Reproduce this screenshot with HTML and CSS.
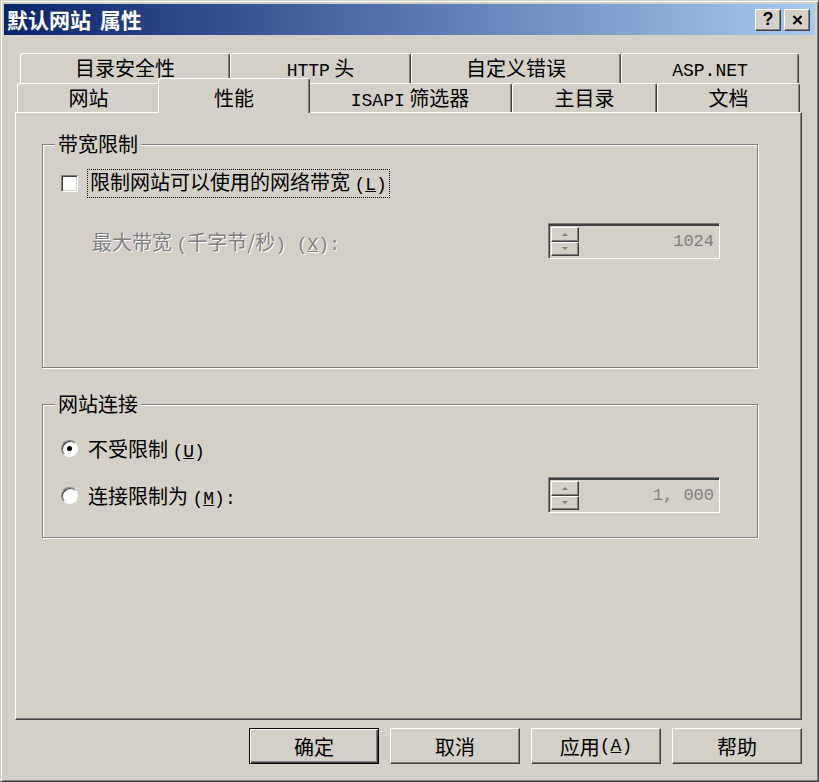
FILE: index.html
```html
<!DOCTYPE html>
<html lang="zh-CN">
<head>
  <meta charset="UTF-8">
  <title>默认网站 属性</title>
  <link rel="stylesheet" href="styles.css">
</head>
<body>
  <div class="window">
    <div class="titlebar">
      <span class="title">默认网站 属性</span>
      <div class="cap-btns">
        <span class="cap-btn">?</span>
        <span class="cap-btn">
          <svg width="11" height="10" viewBox="0 0 11 10"><path d="M1.5 1 L9.5 9 M9.5 1 L1.5 9" stroke="#000" stroke-width="2.2" fill="none"/></svg>
        </span>
      </div>
    </div>

    <div class="tabs">
      <div class="tab-row back">
        <div class="tab t-dirsec">目录安全性</div>
        <div class="tab t-http"><span class="en">HTTP</span> 头</div>
        <div class="tab t-err">自定义错误</div>
        <div class="tab t-asp"><span class="en">ASP.NET</span></div>
      </div>
      <div class="tab-row front">
        <div class="tab t-site">网站</div>
        <div class="tab t-perf active">性能</div>
        <div class="tab t-isapi"><span class="en">ISAPI</span> 筛选器</div>
        <div class="tab t-home">主目录</div>
        <div class="tab t-docs">文档</div>
      </div>
    </div>

    <div class="panel">
      <div class="group g1">
        <div class="legend">带宽限制</div>
        <div class="check-row">
          <span class="checkbox"></span>
          <span class="focus">限制网站可以使用的网络带宽 <span class="en">(<u>L</u>)</span></span>
        </div>
        <div class="spin-row indent">
          <span class="disabled">最大带宽 <span class="en">(</span>千字节/秒<span class="en">) (<u>X</u>):</span></span>
          <div class="spin">
            <div class="spin-btns">
              <span class="spin-btn"><i class="arrow up"></i></span>
              <span class="spin-btn"><i class="arrow down"></i></span>
            </div>
            <span class="spin-val">1024</span>
          </div>
        </div>
      </div>

      <div class="group g2">
        <div class="legend">网站连接</div>
        <div class="radio-row">
          <span class="radio on"></span>
          <span class="label">不受限制 <span class="en">(<u>U</u>)</span></span>
        </div>
        <div class="spin-row limit">
          <div class="radio-row inline">
            <span class="radio"></span>
            <span class="label">连接限制为 <span class="en">(<u>M</u>):</span></span>
          </div>
          <div class="spin">
            <div class="spin-btns">
              <span class="spin-btn"><i class="arrow up"></i></span>
              <span class="spin-btn"><i class="arrow down"></i></span>
            </div>
            <span class="spin-val">1, 000</span>
          </div>
        </div>
      </div>
    </div>

    <div class="buttons">
      <button class="btn default">确定</button>
      <button class="btn">取消</button>
      <button class="btn">应用 <span class="en">(<u>A</u>)</span></button>
      <button class="btn">帮助</button>
    </div>
  </div>
</body>
</html>
```

FILE: styles.css
```css
body {
  margin: 0;
  background: #d4d0c8;
  font-family: "Noto Sans CJK SC", "Noto Sans", sans-serif;
  font-size: 20px;
  color: #000;
}

.en {
  font-family: "Liberation Mono", "Noto Sans CJK SC", monospace;
  font-size: 18px;
}

.window {
  width: 819px;
  height: 782px;
  box-sizing: border-box;
  border: 1px solid;
  border-color: #d4d0c8 #404040 #404040 #d4d0c8;
  box-shadow: inset 1px 1px #fff, inset -1px -1px #808080;
  padding: 3px;
}

/* title bar */
.titlebar {
  height: 31px;
  display: flex;
  align-items: center;
  justify-content: space-between;
  padding: 0 5px 0 3px;
  background: linear-gradient(to right, #0a246a, #a6caf0);
}
.title {
  color: #fff;
  font-weight: bold;
  font-size: 21px;
  line-height: 31px;
  word-spacing: 4px;
}
.cap-btns {
  display: flex;
  gap: 3px;
}
.cap-btn {
  width: 26px;
  height: 22px;
  box-sizing: border-box;
  background: #d4d0c8;
  border: 1px solid;
  border-color: #fff #404040 #404040 #fff;
  box-shadow: inset -1px -1px #808080;
  display: flex;
  align-items: center;
  justify-content: center;
  font: bold 18px "Liberation Sans", sans-serif;
}

/* tabs */
.tabs {
  margin: 18px 0 0 11px;
}
.tab-row {
  display: flex;
  height: 30px;
}
.tab-row.back {
  padding-left: 5px;
}
.tab-row.front {
  padding-left: 2px;
  height: 29px;
  align-items: flex-end;
}
.tab {
  box-sizing: border-box;
  height: 30px;
  border-top: 1px solid #fff;
  border-left: 1px solid #fff;
  border-right: 1px solid #404040;
  box-shadow: inset -1px 0 #808080;
  border-radius: 3px 3px 0 0;
  text-align: center;
  line-height: 28px;
  white-space: nowrap;
}
.front .tab {
  height: 29px;
}
.front .tab.active {
  height: 35px;
  margin: -5px -2px -1px -2px;
  padding-top: 5px;
  position: relative;
  z-index: 1;
  background: #d4d0c8;
}
.t-dirsec { width: 210px; }
.t-http { width: 181px; }
.t-err { width: 210px; }
.t-asp { width: 178px; }
.t-site { width: 143px; }
.t-perf { width: 152px; }
.t-isapi { width: 204px; }
.t-home { width: 145px; }
.t-docs { width: 143px; }

/* page */
.panel {
  margin-left: 11px;
  width: 787px;
  height: 608px;
  box-sizing: border-box;
  border: 1px solid;
  border-color: #fff #404040 #404040 #fff;
  box-shadow: inset -1px -1px #808080;
  padding-left: 26px;
}

.group {
  width: 716px;
  box-sizing: border-box;
  border: 1px solid #808080;
  box-shadow: 1px 1px #fff, inset 1px 1px #fff;
}
.g1 {
  margin-top: 31px;
  height: 224px;
}
.g2 {
  margin-top: 36px;
  height: 134px;
}
.legend {
  display: table;
  margin: -12px 0 0 12px;
  padding: 0 3px;
  background: #d4d0c8;
  line-height: 22px;
}

.check-row {
  display: flex;
  align-items: center;
  height: 26px;
  margin: 15px 0 0 18px;
}
.checkbox {
  width: 17px;
  height: 17px;
  box-sizing: border-box;
  background: #fff;
  border: 1px solid;
  border-color: #808080 #fff #fff #808080;
  box-shadow: inset 1px 1px #404040, inset -1px -1px #d4d0c8;
}
.focus {
  margin-left: 9px;
  border: 1px dotted #000;
  line-height: 24px;
  padding: 0 2px;
}

.spin-row {
  display: flex;
  align-items: center;
  justify-content: space-between;
  height: 36px;
  margin-right: 37px;
}
.spin-row.indent {
  margin-top: 27px;
  margin-left: 49px;
}
.spin-row.limit {
  margin-top: 17px;
  margin-left: 18px;
}
.disabled {
  color: #808080;
  text-shadow: 1px 1px #fff;
}

.spin {
  width: 172px;
  height: 36px;
  box-sizing: border-box;
  display: flex;
  border: 1px solid;
  border-color: #808080 #fff #fff #808080;
  box-shadow: inset 1px 1px #404040, inset 0 2px #404040, inset -1px -1px #d4d0c8;
  padding: 3px 2px 2px 2px;
}
.spin-btns {
  width: 28px;
  display: flex;
  flex-direction: column;
}
.spin-btn {
  flex: 1;
  box-sizing: border-box;
  border: 1px solid;
  border-color: #fff #404040 #404040 #fff;
  box-shadow: inset -1px -1px #808080;
  display: flex;
  align-items: center;
  justify-content: center;
}
.arrow {
  width: 0;
  height: 0;
  border-left: 3px solid transparent;
  border-right: 3px solid transparent;
}
.arrow.up {
  border-bottom: 3px solid #808080;
}
.arrow.down {
  border-top: 3px solid #808080;
}
.spin-val {
  flex: 1;
  text-align: right;
  align-self: center;
  padding-right: 3px;
  color: #808080;
  font-family: "Liberation Mono", monospace;
  font-size: 17px;
}

.radio-row {
  display: flex;
  align-items: center;
  height: 24px;
  margin: 21px 0 0 18px;
}
.radio-row.inline {
  margin: 0;
}
.radio {
  width: 17px;
  height: 17px;
  box-sizing: border-box;
  border-radius: 50%;
  background: #fff;
  border: 1px solid;
  border-color: #808080 #fff #fff #808080;
  box-shadow: inset 1px 1px #404040;
  display: flex;
  align-items: center;
  justify-content: center;
}
.radio.on::after {
  content: "";
  width: 5px;
  height: 5px;
  border-radius: 50%;
  background: #000;
}
.label {
  margin-left: 10px;
}

/* bottom buttons */
.buttons {
  display: flex;
  justify-content: flex-end;
  gap: 11px;
  width: 787px;
  margin: 8px 0 0 11px;
}
.btn {
  width: 130px;
  height: 36px;
  box-sizing: border-box;
  background: #d4d0c8;
  font-family: inherit;
  font-size: 20px;
  color: #000;
  padding: 0;
  border: 1px solid;
  border-color: #fff #404040 #404040 #fff;
  box-shadow: inset -1px -1px #808080;
  display: flex;
  align-items: center;
  justify-content: center;
}
.btn.default {
  border-color: #000;
  box-shadow: inset 1px 1px #fff, inset -1px -1px #404040, inset -2px -2px #808080;
}
```
